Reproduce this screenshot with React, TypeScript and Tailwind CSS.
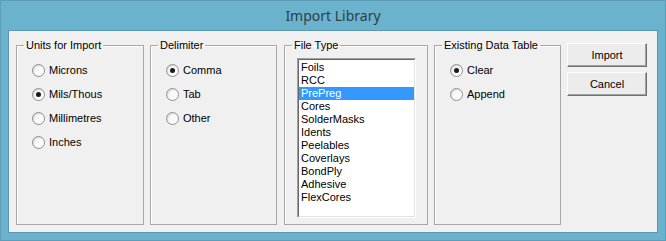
import React from 'react'

const units = ['Microns', 'Mils/Thous', 'Millimetres', 'Inches']
const delims = ['Comma', 'Tab', 'Other']
const fileTypes = ['Foils', 'RCC', 'PrePreg', 'Cores', 'SolderMasks', 'Idents', 'Peelables', 'Coverlays', 'BondPly', 'Adhesive', 'FlexCores']
const existing = ['Clear', 'Append']

function Radio({ label, checked }: { label: string; checked?: boolean }) {
  return (
    <div className="flex h-[24px] items-center pl-[15px]">
      <span className="flex h-[13px] w-[13px] items-center justify-center rounded-full border border-[#8f8f8f] bg-gradient-to-br from-[#f4f4f4] to-[#ffffff] shadow-[inset_1px_1px_1px_rgba(0,0,0,0.12)]">
        {checked && <span className="h-[5px] w-[5px] rounded-full bg-[#1a1a1a]" />}
      </span>
      <span className="ml-[4px]">{label}</span>
    </div>
  )
}

function Group({ title, className, children }: { title: string; className?: string; children: React.ReactNode }) {
  return (
    <fieldset className={`h-[186px] border border-[#a8a8a8] shadow-[inset_1px_1px_0_#fff] ${className ?? ''}`}>
      <legend className="ml-[7px] px-[2px] leading-[13px]">{title}</legend>
      <div className="pt-[6px]">{children}</div>
    </fieldset>
  )
}

function Button({ label }: { label: string }) {
  return (
    <button className="h-[24px] w-[80px] border border-t-[#fdfdfd] border-l-[#fdfdfd] border-r-[#707070] border-b-[#707070] bg-[#ececec] pt-[1px] text-black shadow-[inset_-1px_-1px_0_#a0a0a0]">
      {label}
    </button>
  )
}

export default function App() {
  return (
    <div className="flex h-[241px] w-[666px] flex-col border border-[#5e9cb7] bg-[#6bb2cd] text-[11px] text-black [font-family:'Liberation_Sans',Arial,sans-serif]">
      <div className="flex h-[29px] items-center justify-center text-[14px] text-[#2f3e46] [font-family:'Noto_Sans',sans-serif]">
        Import Library
      </div>
      <div className="mx-[7px] mb-[7px] flex flex-1 border border-[#5b97b0] bg-[#f0f0f0] pl-[7px] pt-[8px]">
        <Group title="Units for Import" className="w-[128px]">
          {units.map((u, i) => (
            <Radio key={u} label={u} checked={i === 1} />
          ))}
        </Group>
        <Group title="Delimiter" className="ml-[6px] w-[127px]">
          {delims.map((d, i) => (
            <Radio key={d} label={d} checked={i === 0} />
          ))}
        </Group>
        <Group title="File Type" className="ml-[7px] w-[144px]">
          <div className="ml-[12px] h-[160px] w-[119px] border border-t-[#a0a0a0] border-l-[#a0a0a0] border-r-white border-b-white">
            <div className="h-full border border-t-[#696969] border-l-[#696969] border-r-[#e3e3e3] border-b-[#e3e3e3] bg-white pt-[1px]">
              {fileTypes.map(f => (
                <div key={f} className={`h-[13px] pl-[2px] leading-[13px] ${f === 'PrePreg' ? 'bg-[#3399ff] text-white' : ''}`}>
                  {f}
                </div>
              ))}
            </div>
          </div>
        </Group>
        <Group title="Existing Data Table" className="ml-[6px] w-[127px]">
          {existing.map((e, i) => (
            <Radio key={e} label={e} checked={i === 0} />
          ))}
        </Group>
        <div className="ml-[6px] flex flex-col gap-[5px] pt-[4px]">
          <Button label="Import" />
          <Button label="Cancel" />
        </div>
      </div>
    </div>
  )
}
